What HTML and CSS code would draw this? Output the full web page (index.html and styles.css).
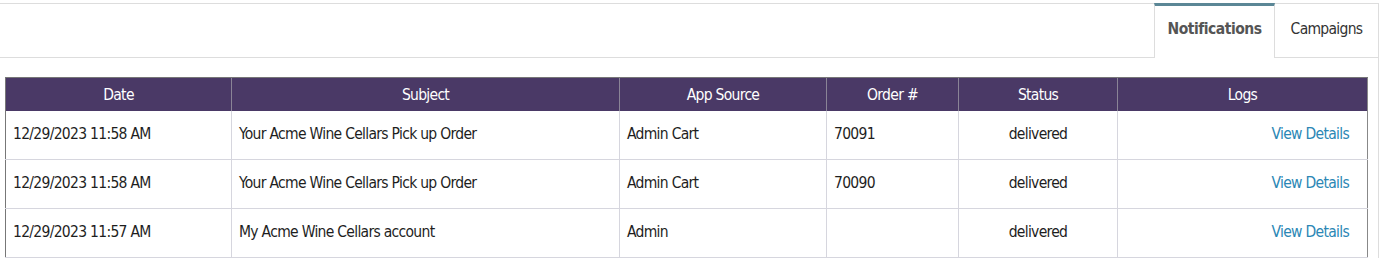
FILE: index.html
```html
<!DOCTYPE html>
<html>
<head>
<meta charset="utf-8">
<link rel="stylesheet" href="styles.css">
</head>
<body>
<div class="panel">
  <div class="tabs">
    <div class="tab active">Notifications</div>
    <div class="tab">Campaigns</div>
  </div>
  <div class="content">
    <table class="grid">
      <colgroup>
        <col class="c-date"><col class="c-subj"><col class="c-app"><col class="c-order"><col class="c-status"><col class="c-logs">
      </colgroup>
      <thead>
        <tr><th>Date</th><th>Subject</th><th>App Source</th><th>Order #</th><th>Status</th><th>Logs</th></tr>
      </thead>
      <tbody>
        <tr><td>12/29/2023 11:58 AM</td><td>Your Acme Wine Cellars Pick up Order</td><td>Admin Cart</td><td>70091</td><td class="center">delivered</td><td class="right"><a href="#">View Details</a></td></tr>
        <tr><td>12/29/2023 11:58 AM</td><td>Your Acme Wine Cellars Pick up Order</td><td>Admin Cart</td><td>70090</td><td class="center">delivered</td><td class="right"><a href="#">View Details</a></td></tr>
        <tr><td>12/29/2023 11:57 AM</td><td>My Acme Wine Cellars account</td><td>Admin</td><td></td><td class="center">delivered</td><td class="right"><a href="#">View Details</a></td></tr>
      </tbody>
    </table>
  </div>
</div>
</body>
</html>
```
FILE: styles.css
```css
html, body {
  margin: 0;
  padding: 0;
  background: #fff;
}
body {
  font-family: "DejaVu Sans", sans-serif;
  font-stretch: condensed;
  font-size: 15.5px;
  letter-spacing: -0.7px;
  color: #1e1e1e;
}
.panel {
  margin-top: 3px;
  width: 1378px;
  border-top: 1px solid #dddddd;
  border-right: 1px solid #dddddd;
  height: 260px;
}
.tabs {
  display: flex;
  justify-content: flex-end;
  height: 53px;
  border-bottom: 1px solid #dddddd;
}
.tab {
  height: 53px;
  box-sizing: border-box;
  display: flex;
  align-items: center;
  justify-content: center;
  color: #333;
  width: 103px;
  padding-bottom: 4px;
}
.tab.active {
  width: 121px;
  margin-top: -1px;
  height: 55px;
  border-top: 3px solid #5b8796;
  border-left: 1px solid #dddddd;
  border-right: 1px solid #dddddd;
  background: #fff;
  font-weight: bold;
  color: #555;
  padding-bottom: 6px;
  letter-spacing: -0.5px;
}
.content {
  padding: 19px 0 0 5px;
}
.grid {
  border-collapse: collapse;
  width: 1362px;
  table-layout: fixed;
  border-left: 1px solid #777;
  border-right: 1px solid #888;
}
.c-date { width: 226px; }
.c-subj { width: 388px; }
.c-app { width: 207px; }
.c-order { width: 132px; }
.c-status { width: 159px; }
.c-logs { width: 250px; }
.grid th {
  background: #4a3966;
  color: #fff;
  font-weight: normal;
  height: 33px;
  padding: 0;
  border-left: 1px solid #8a8496;
  border-top: 1px solid #777;
  text-align: center;
}
.grid th:first-child { border-left: none; }
.grid td {
  height: 46px;
  padding: 0 7px 2px;
  border-bottom: 1px solid #d6d6de;
  border-left: 1px solid #d6d6de;
  vertical-align: middle;
  white-space: nowrap;
}
.grid td:first-child { border-left: none; }
.grid td.center { text-align: center; }
.grid td.right { text-align: right; padding-right: 18px; }
.grid a {
  color: #2b87b5;
  text-decoration: none;
}
```
